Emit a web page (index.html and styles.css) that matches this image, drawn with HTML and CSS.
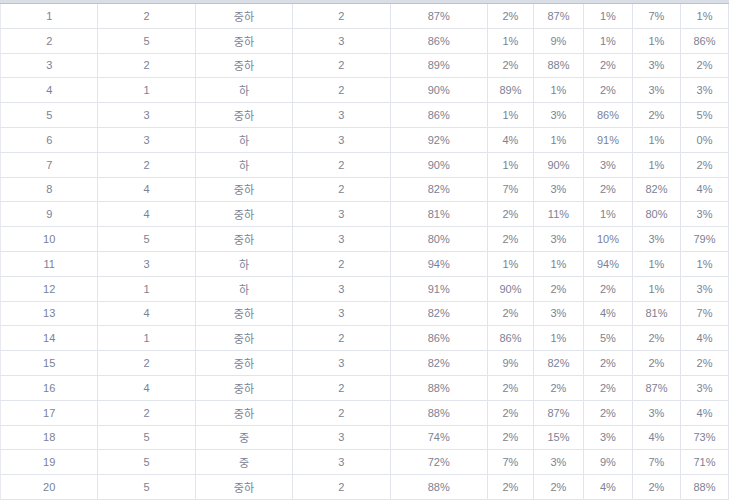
FILE: index.html
```html
<!DOCTYPE html>
<html lang="ko">
<head>
<meta charset="utf-8">
<link rel="stylesheet" href="styles.css">
</head>
<body>
<div class="wrap">
<div class="head-band"></div>
<table class="grid">
<colgroup>
<col class="c-wide"><col class="c-wide"><col class="c-wide"><col class="c-wide"><col class="c-wide">
<col class="c-s1"><col class="c-s2"><col class="c-s3"><col class="c-s4"><col class="c-s4">
</colgroup>
<tbody>
<tr><td>1</td><td>2</td><td>중하</td><td>2</td><td>87%</td><td>2%</td><td>87%</td><td>1%</td><td>7%</td><td>1%</td></tr>
<tr><td>2</td><td>5</td><td>중하</td><td>3</td><td>86%</td><td>1%</td><td>9%</td><td>1%</td><td>1%</td><td>86%</td></tr>
<tr><td>3</td><td>2</td><td>중하</td><td>2</td><td>89%</td><td>2%</td><td>88%</td><td>2%</td><td>3%</td><td>2%</td></tr>
<tr><td>4</td><td>1</td><td>하</td><td>2</td><td>90%</td><td>89%</td><td>1%</td><td>2%</td><td>3%</td><td>3%</td></tr>
<tr><td>5</td><td>3</td><td>중하</td><td>3</td><td>86%</td><td>1%</td><td>3%</td><td>86%</td><td>2%</td><td>5%</td></tr>
<tr><td>6</td><td>3</td><td>하</td><td>3</td><td>92%</td><td>4%</td><td>1%</td><td>91%</td><td>1%</td><td>0%</td></tr>
<tr><td>7</td><td>2</td><td>하</td><td>2</td><td>90%</td><td>1%</td><td>90%</td><td>3%</td><td>1%</td><td>2%</td></tr>
<tr><td>8</td><td>4</td><td>중하</td><td>2</td><td>82%</td><td>7%</td><td>3%</td><td>2%</td><td>82%</td><td>4%</td></tr>
<tr><td>9</td><td>4</td><td>중하</td><td>3</td><td>81%</td><td>2%</td><td>11%</td><td>1%</td><td>80%</td><td>3%</td></tr>
<tr><td>10</td><td>5</td><td>중하</td><td>3</td><td>80%</td><td>2%</td><td>3%</td><td>10%</td><td>3%</td><td>79%</td></tr>
<tr><td>11</td><td>3</td><td>하</td><td>2</td><td>94%</td><td>1%</td><td>1%</td><td>94%</td><td>1%</td><td>1%</td></tr>
<tr><td>12</td><td>1</td><td>하</td><td>3</td><td>91%</td><td>90%</td><td>2%</td><td>2%</td><td>1%</td><td>3%</td></tr>
<tr><td>13</td><td>4</td><td>중하</td><td>3</td><td>82%</td><td>2%</td><td>3%</td><td>4%</td><td>81%</td><td>7%</td></tr>
<tr><td>14</td><td>1</td><td>중하</td><td>2</td><td>86%</td><td>86%</td><td>1%</td><td>5%</td><td>2%</td><td>4%</td></tr>
<tr><td>15</td><td>2</td><td>중하</td><td>3</td><td>82%</td><td>9%</td><td>82%</td><td>2%</td><td>2%</td><td>2%</td></tr>
<tr><td>16</td><td>4</td><td>중하</td><td>2</td><td>88%</td><td>2%</td><td>2%</td><td>2%</td><td>87%</td><td>3%</td></tr>
<tr><td>17</td><td>2</td><td>중하</td><td>2</td><td>88%</td><td>2%</td><td>87%</td><td>2%</td><td>3%</td><td>4%</td></tr>
<tr><td>18</td><td>5</td><td>중</td><td>3</td><td>74%</td><td>2%</td><td>15%</td><td>3%</td><td>4%</td><td>73%</td></tr>
<tr><td>19</td><td>5</td><td>중</td><td>3</td><td>72%</td><td>7%</td><td>3%</td><td>9%</td><td>7%</td><td>71%</td></tr>
<tr><td>20</td><td>5</td><td>중하</td><td>2</td><td>88%</td><td>2%</td><td>2%</td><td>4%</td><td>2%</td><td>88%</td></tr>
</tbody>
</table>
</div>
</body>
</html>
```

FILE: styles.css
```css
html, body {
  margin: 0;
  padding: 0;
  background: #ffffff;
  overflow: hidden;
}
.wrap {
  width: 740px;
  height: 500px;
  overflow: hidden;
}
.head-band {
  width: 729px;
  height: 3px;
  background: #d9dee7;
  border-bottom: 1px solid #b9c2d0;
}
.grid {
  table-layout: fixed;
  border-collapse: collapse;
  width: 729px;
  font-family: "Liberation Sans", "Noto Sans CJK KR", sans-serif;
  font-size: 11px;
  color: #7b8295;
}
.c-wide { width: 97.4px; }
.c-s1 { width: 46px; }
.c-s2 { width: 50px; }
.c-s3 { width: 49px; }
.c-s4 { width: 48px; }
.grid td {
  height: 23.8px;
  padding: 0;
  text-align: center;
  vertical-align: middle;
  border: 1px solid #e1e4ea;
  border-top: none;
  white-space: nowrap;
  overflow: hidden;
}
.grid td:first-child {
  border-left: 1px solid #e8eaef;
}
```
